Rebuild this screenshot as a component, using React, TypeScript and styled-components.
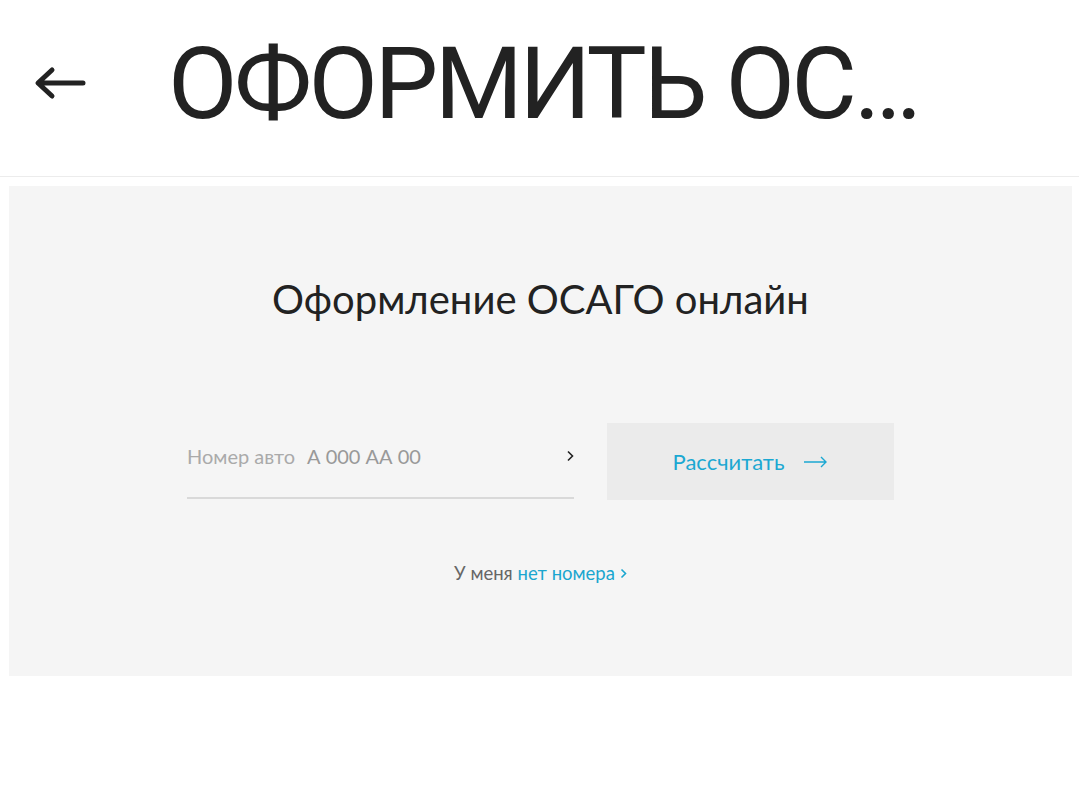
import React from "react";
import styled, { createGlobalStyle } from "styled-components";

const GlobalStyle = createGlobalStyle`
  html, body {
    margin: 0;
    padding: 0;
    background: #ffffff;
  }
  body {
    font-family: "Lato", "Noto Sans", sans-serif;
    color: #222222;
  }
`;

const Header = styled.header`
  height: 177px;
  display: flex;
  align-items: center;
  border-bottom: 1px solid #ececec;
  padding: 0 0 10px 34px;
  box-sizing: border-box;
`;

const BackButton = styled.button`
  width: 56px;
  height: 40px;
  padding: 0;
  border: 0;
  background: none;
  display: flex;
  align-items: center;
  cursor: pointer;
  color: #222;
`;

const Title = styled.h1`
  margin: 0 0 0 78px;
  max-width: 765px;
  font-family: "Roboto", sans-serif;
  font-weight: 400;
  font-size: 101px;
  line-height: 1;
  letter-spacing: -3.5px;
  color: #222;
  white-space: nowrap;
  overflow: hidden;
  text-overflow: ellipsis;
`;

const Panel = styled.section`
  margin: 9px 7px 0 9px;
  height: 490px;
  background: #f5f5f5;
  display: flex;
  flex-direction: column;
  align-items: center;
  padding-top: 89px;
  box-sizing: border-box;
`;

const Heading = styled.h2`
  margin: 0;
  font-weight: 400;
  font-size: 40px;
  line-height: 48px;
  color: #222;
`;

const Form = styled.div`
  display: flex;
  gap: 33px;
  margin-top: 100px;
`;

const Field = styled.label`
  width: 387px;
  height: 76px;
  display: flex;
  align-items: center;
  border-bottom: 2px solid #d9d9d9;
  box-sizing: border-box;
  padding-bottom: 8px;
  font-size: 20px;
`;

const FieldLabel = styled.span`
  color: #aaaaaa;
  margin-right: 12px;
`;

const Plate = styled.span`
  color: #999999;
  flex: 1;
`;

const Calc = styled.button`
  width: 287px;
  height: 77px;
  border: 0;
  background: #ebebeb;
  color: #1ba8d2;
  font-family: "Lato", sans-serif;
  font-size: 22px;
  display: flex;
  align-items: center;
  justify-content: center;
  gap: 20px;
  padding: 0;
  cursor: pointer;
`;

const Note = styled.p`
  margin: 62px 0 0;
  font-size: 18.5px;
  color: #666666;
`;

const Link = styled.a`
  color: #1aa6cf;
  text-decoration: none;
  display: inline-flex;
  align-items: center;
  gap: 5px;
`;

export default function App() {
  return (
    <>
      <GlobalStyle />
      <Header>
        <BackButton aria-label="Назад">
          <svg width="52" height="34" viewBox="0 0 52 34" fill="none">
            <path
              d="M49 17H5M18 4L4 17l14 13"
              stroke="currentColor"
              strokeWidth="5"
              strokeLinecap="round"
              strokeLinejoin="round"
            />
          </svg>
        </BackButton>
        <Title>ОФОРМИТЬ ОСАГО</Title>
      </Header>
      <Panel>
        <Heading>Оформление ОСАГО онлайн</Heading>
        <Form>
          <Field>
            <FieldLabel>Номер авто</FieldLabel>
            <Plate>А 000 АА 00</Plate>
            <svg width="8" height="12" viewBox="0 0 8 12" fill="none">
              <path d="M2 1.5L6.5 6 2 10.5" stroke="#222" strokeWidth="1.6" />
            </svg>
          </Field>
          <Calc>
            Рассчитать
            <svg width="24" height="12" viewBox="0 0 24 12" fill="none">
              <path d="M0 6h22M17 1l5 5-5 5" stroke="currentColor" strokeWidth="1.4" />
            </svg>
          </Calc>
        </Form>
        <Note>
          У меня{" "}
          <Link href="#">
            нет номера
            <svg width="7" height="11" viewBox="0 0 7 11" fill="none">
              <path d="M1.5 1.5L5.5 5.5 1.5 9.5" stroke="currentColor" strokeWidth="1.6" />
            </svg>
          </Link>
        </Note>
      </Panel>
    </>
  );
}
